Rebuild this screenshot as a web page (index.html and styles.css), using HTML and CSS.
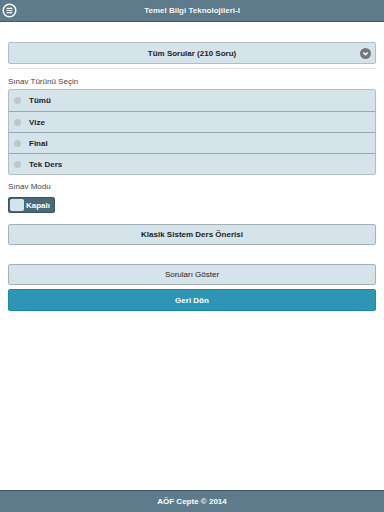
FILE: index.html
```html
<!DOCTYPE html>
<html lang="tr">
<head>
    <meta charset="UTF-8">
    <meta name="viewport" content="width=device-width, initial-scale=1.0">
    <title>Temel Bilgi Teknolojileri-I</title>
    <link rel="stylesheet" href="styles.css">
</head>
<body>
    <div class="header">
        <button class="menu-btn" aria-label="Menü">
            <svg width="15" height="15" viewBox="0 0 15 15">
                <circle cx="7.5" cy="7.5" r="6.3" fill="none" stroke="#fff" stroke-width="1.4"/>
                <path d="M4.6 5.4h5.8M4.6 7.5h5.8M4.6 9.6h5.8" stroke="#fff" stroke-width="1.2"/>
            </svg>
        </button>
        <h1>Temel Bilgi Teknolojileri-I</h1>
    </div>

    <div class="content">
        <div class="select">
            <span>Tüm Sorular (210 Soru)</span>
            <svg class="select-icon" width="11" height="11" viewBox="0 0 11 11">
                <circle cx="5.5" cy="5.5" r="5.5" fill="#777"/>
                <path d="M3.4 4.6l2.1 2.1 2.1-2.1" fill="none" stroke="#fff" stroke-width="1.5"/>
            </svg>
        </div>
        <div class="divider"></div>

        <div class="label">Sınav Türünü Seçin</div>
        <div class="radio-list">
            <div class="radio"><span class="dot"></span>Tümü</div>
            <div class="radio"><span class="dot"></span>Vize</div>
            <div class="radio"><span class="dot"></span>Final</div>
            <div class="radio"><span class="dot"></span>Tek Ders</div>
        </div>

        <div class="label label-mode">Sınav Modu</div>
        <div class="toggle">
            <span class="toggle-box"></span>
            <span class="toggle-text">Kapalı</span>
        </div>

        <button class="btn btn-bold">Klasik Sistem Ders Önerisi</button>
        <button class="btn btn-show">Soruları Göster</button>
        <button class="btn btn-primary">Geri Dön</button>
    </div>

    <div class="footer">AÖF Cepte © 2014</div>
</body>
</html>
```

FILE: styles.css
```css
html, body {
    height: 100%;
}

body {
    margin: 0;
    font-family: "Liberation Sans", Arial, sans-serif;
    color: #222;
    background: #fff;
    display: flex;
    flex-direction: column;
}

.header {
    height: 21px;
    background: #5e7b8c;
    border-bottom: 1px solid #3f5866;
    display: flex;
    align-items: center;
    justify-content: center;
    position: relative;
}

.header h1 {
    margin: 0;
    color: #fff;
    font-size: 8px;
    font-weight: bold;
    text-shadow: 0 0 1px rgba(0, 0, 0, 0.3);
}

.menu-btn {
    position: absolute;
    left: 2px;
    top: 3px;
    padding: 0;
    border: none;
    background: none;
    width: 15px;
    height: 15px;
}

.menu-btn svg {
    display: block;
}

.content {
    flex: 1;
    padding: 20px 8px 0;
    display: flex;
    flex-direction: column;
}

.select {
    height: 20px;
    background: #d5e4eb;
    border: 1px solid #b3bec4;
    border-radius: 2px;
    display: flex;
    align-items: center;
    justify-content: center;
    position: relative;
    font-size: 8px;
    font-weight: bold;
}

.select-icon {
    position: absolute;
    right: 4px;
    top: 5px;
}

.divider {
    height: 1px;
    background: #e6e6e6;
    margin-top: 4px;
}

.label {
    font-size: 8px;
    color: #444;
    margin: 8px 0 3px;
}

.label-mode {
    margin-top: 7px;
}

.radio-list {
    border: 1px solid #b3bec4;
    border-radius: 2px;
    background: #d5e4eb;
}

.radio {
    height: 20px;
    display: flex;
    align-items: center;
    padding-left: 5px;
    font-size: 8px;
    font-weight: bold;
    border-top: 1px solid #9aa7ae;
}

.radio:first-child {
    border-top: none;
    height: 21px;
}

.dot {
    width: 7px;
    height: 7px;
    border-radius: 50%;
    background: #bcc6cb;
    margin-right: 8px;
}

.toggle {
    align-self: flex-start;
    display: flex;
    align-items: center;
    height: 12px;
    padding: 1px 4px 1px 1px;
    background: #4b6878;
    border: 1px solid #3a5463;
    border-radius: 2px;
    margin-top: 3px;
}

.toggle-box {
    width: 14px;
    height: 12px;
    background: #d5e4eb;
    border-radius: 2px;
    margin-right: 2px;
}

.toggle-text {
    color: #fff;
    font-size: 8px;
    font-weight: bold;
}

.btn {
    display: block;
    width: 100%;
    height: 21px;
    margin: 11px 0 0;
    padding: 0;
    font-family: inherit;
    font-size: 8px;
    color: #222;
    background: #d5e4eb;
    border: 1px solid #a6b2b8;
    border-radius: 2px;
}

.btn-bold {
    font-weight: bold;
}

.btn-show {
    margin-top: 19px;
}

.btn-primary {
    margin-top: 4px;
    height: 22px;
    background: #2e96b4;
    border-color: #1e88a8;
    color: #fff;
    font-weight: bold;
}

.footer {
    height: 21px;
    background: #5e7b8c;
    border-top: 1px solid #3f5866;
    color: #fff;
    font-size: 8px;
    font-weight: bold;
    display: flex;
    align-items: center;
    justify-content: center;
}
```
